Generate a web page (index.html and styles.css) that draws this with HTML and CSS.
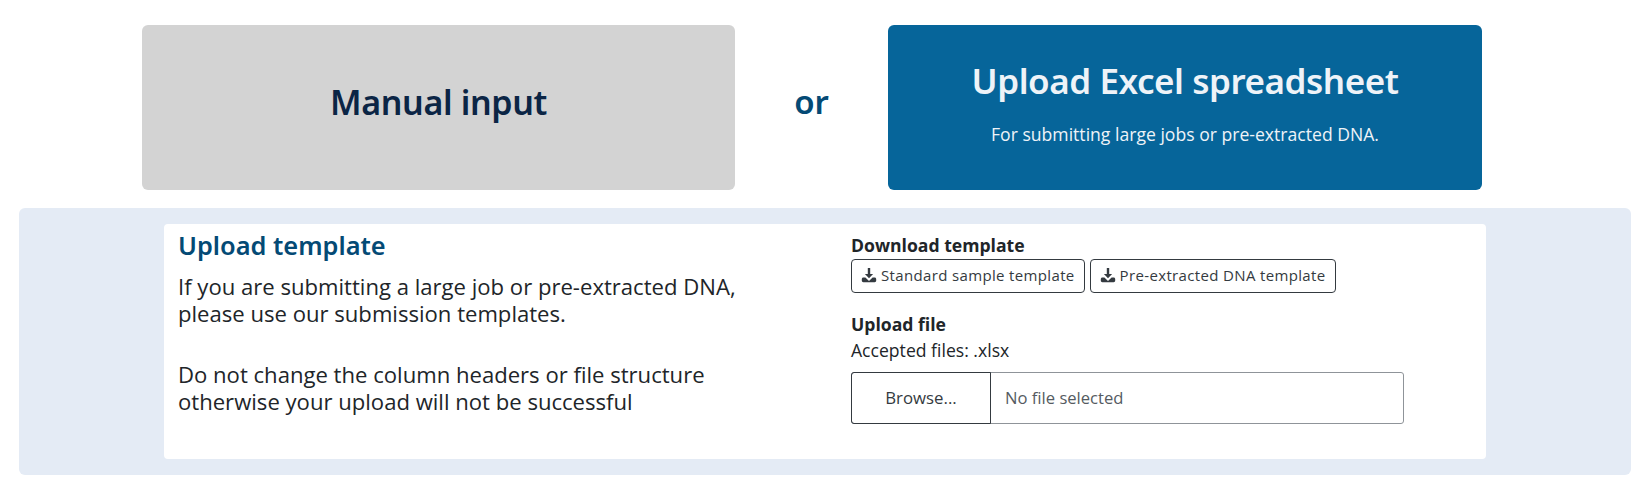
FILE: index.html
```html
<!DOCTYPE html>
<html lang="en">
<head>
    <meta charset="utf-8" />
    <title>Upload template</title>
    <link rel="stylesheet" href="styles.css">
</head>
<body>
    <div class="choice-row">
        <div class="choice choice-manual">
            <h2>Manual input</h2>
        </div>
        <div class="choice-or">or</div>
        <div class="choice choice-upload">
            <h2>Upload Excel spreadsheet</h2>
            <p>For submitting large jobs or pre-extracted DNA.</p>
        </div>
    </div>
    <div class="panel">
        <div class="card">
            <div class="card-left">
                <h3>Upload template</h3>
                <p>If you are submitting a large job or pre-extracted DNA, please use our submission templates.</p>
                <p>Do not change the column headers or file structure otherwise your upload will not be successful</p>
            </div>
            <div class="card-right">
                <div class="label">Download template</div>
                <div class="template-buttons">
                    <a class="template-btn">
                        <svg class="icon" viewBox="0 0 16 16"><path d="M6.800 1h2.400v6h2.900L8 11.200 3.900 7h2.900z"/><path d="M.8 12.200c0-.9.700-1.600 1.600-1.600h2L8 14l3.600-3.400h2c.9 0 1.600.7 1.600 1.600v1.400c0 .9-.7 1.600-1.600 1.600H2.400c-.9 0-1.600-.7-1.600-1.600z"/></svg>
                        Standard sample template
                    </a>
                    <a class="template-btn">
                        <svg class="icon" viewBox="0 0 16 16"><path d="M6.800 1h2.400v6h2.900L8 11.200 3.900 7h2.900z"/><path d="M.8 12.200c0-.9.700-1.600 1.600-1.600h2L8 14l3.600-3.400h2c.9 0 1.600.7 1.600 1.600v1.400c0 .9-.7 1.600-1.600 1.600H2.400c-.9 0-1.600-.7-1.600-1.600z"/></svg>
                        Pre-extracted DNA template
                    </a>
                </div>
                <div class="label label-upload">Upload file</div>
                <div class="accepted">Accepted files: .xlsx</div>
                <div class="file-input">
                    <span class="file-browse">Browse...</span>
                    <span class="file-name">No file selected</span>
                </div>
            </div>
        </div>
    </div>
</body>
</html>
```
FILE: styles.css
```css
body {
    margin: 0;
    background: #ffffff;
    font-family: "Open Sans", "Noto Sans", sans-serif;
    color: #212529;
}
h2, h3, p {
    margin: 0;
}
.choice-row {
    display: flex;
    margin: 25px 166px 0 142px;
    height: 165px;
}
.choice {
    box-sizing: border-box;
    padding-bottom: 12px;
    border-radius: 6px;
    display: flex;
    flex-direction: column;
    align-items: center;
    justify-content: center;
    font-family: "Noto Sans", sans-serif;
}
.choice h2 {
    font-size: 35px;
    font-weight: 600;
    letter-spacing: -0.45px;
}
.choice-manual {
    width: 593px;
    background: #d3d3d3;
    color: #0b2545;
}
.choice-manual h2 {
    font-size: 34px;
    letter-spacing: -0.35px;
}
.choice-upload {
    flex: 1;
    background: #06659a;
    color: #eef3f8;
}
.choice-upload p {
    font-family: "Open Sans", sans-serif;
    font-size: 17.6px;
    margin-top: 18px;
}
.choice-or {
    width: 153px;
    padding-bottom: 12px;
    text-align: center;
    align-self: center;
    font-family: "Noto Sans", sans-serif;
    font-size: 33px;
    font-weight: 600;
    color: #044a75;
}
.panel {
    margin: 18px 17px 0 19px;
    padding: 16px 0;
    background: #e4ebf5;
    border-radius: 6px;
    display: flex;
    justify-content: center;
}
.card {
    width: 1322px;
    height: 235px;
    background: #ffffff;
    border-radius: 4px;
    display: flex;
    box-sizing: border-box;
    padding-left: 14px;
}
.card-left {
    width: 673px;
}
.card-left h3 {
    font-family: "Noto Sans", sans-serif;
    font-size: 25.4px;
    font-weight: 600;
    color: #044a75;
    line-height: 34px;
    margin-top: 4px;
}
.card-left p {
    font-size: 22.1px;
    line-height: 27.4px;
    width: 570px;
    margin-top: 11px;
}
.card-left p + p {
    margin-top: 33px;
}
.card-right {
    padding-top: 10px;
}
.label {
    font-size: 17.6px;
    font-weight: 700;
    line-height: 22px;
}
.label-upload {
    margin-top: 20px;
}
.accepted {
    font-size: 17.6px;
    line-height: 22px;
    margin-top: 4px;
}
.template-buttons {
    display: flex;
    gap: 5px;
    margin-top: 3px;
}
.template-btn {
    display: flex;
    align-items: center;
    height: 34px;
    box-sizing: border-box;
    padding: 0 9px 2px;
    border: 1px solid #343a40;
    border-radius: 4px;
    font-size: 15px;
    letter-spacing: 0.35px;
    color: #343a40;
}
.icon {
    width: 16px;
    height: 16px;
    margin-right: 4px;
    fill: #343a40;
}
.file-input {
    display: flex;
    width: 553px;
    height: 52px;
    margin-top: 11px;
    box-sizing: border-box;
    border: 1px solid #8f9499;
    border-radius: 3px;
    font-size: 16.6px;
}
.file-browse {
    width: 138px;
    margin: -1px 0 -1px -1px;
    padding-bottom: 1px;
    border: 1px solid #343a40;
    border-radius: 3px 0 0 3px;
    display: flex;
    align-items: center;
    justify-content: center;
    font-size: 16.8px;
    color: #343a40;
}
.file-name {
    display: flex;
    align-items: center;
    padding: 0 0 1px 14px;
    color: #555b61;
}
```
